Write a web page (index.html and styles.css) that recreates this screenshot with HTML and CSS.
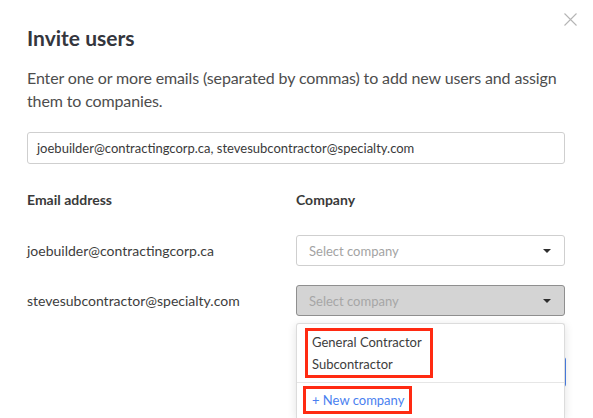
FILE: index.html
```html
<!DOCTYPE html>
<html>
<head>
<meta charset="utf-8">
<link rel="stylesheet" href="styles.css">
</head>
<body>
<div class="modal">
  <button class="close" aria-label="Close">
    <svg width="13" height="13" viewBox="0 0 13 13"><path d="M0.5 0.5 L12.5 12.5 M12.5 0.5 L0.5 12.5" stroke="#b5b5b5" stroke-width="1.1" fill="none"/></svg>
  </button>
  <h1 class="title">Invite users</h1>
  <p class="intro">Enter one or more emails (separated by commas) to add new users and assign them to companies.</p>
  <div class="emails-input">joebuilder@contractingcorp.ca, stevesubcontractor@specialty.com</div>
  <div class="grid">
    <div class="head">Email address</div>
    <div class="head">Company</div>

    <div class="email">joebuilder@contractingcorp.ca</div>
    <div class="select">
      <span class="placeholder">Select company</span>
      <span class="caret"></span>
    </div>

    <div class="email row2">stevesubcontractor@specialty.com</div>
    <div class="select-wrap row2">
      <div class="select active">
        <span class="placeholder">Select company</span>
        <span class="caret"></span>
      </div>
      <div class="dropdown">
        <div class="mark mark-items">
          <div class="item">General Contractor</div>
          <div class="item">Subcontractor</div>
        </div>
        <div class="divider"></div>
        <div class="mark mark-new">
          <div class="item new">+ New company</div>
        </div>
      </div>
    </div>
  </div>
  <div class="footer">
    <button class="primary">Invite</button>
  </div>
</div>
</body>
</html>
```

FILE: styles.css
```css
* { box-sizing: border-box; }
html, body {
  margin: 0;
  padding: 0;
  background: #fff;
}
body {
  font-family: Lato, "Open Sans", sans-serif;
  color: #4a4a4a;
  width: 593px;
  height: 418px;
  overflow: hidden;
}
.modal {
  position: relative;
  padding: 24px 28px 0 27px;
}
.close {
  position: absolute;
  top: 13px;
  left: 564px;
  width: 13px;
  height: 13px;
  padding: 0;
  border: 0;
  background: none;
  line-height: 0;
}
.title {
  margin: 0;
  font-size: 21px;
  line-height: 28px;
  font-weight: 700;
  color: #34363d;
}
.intro {
  margin: 14px 0 0;
  font-size: 16px;
  line-height: 23px;
  letter-spacing: -0.13px;
  color: #4d4d4d;
}
.emails-input {
  margin-top: 20px;
  height: 32px;
  border: 1px solid #cfcfcf;
  border-radius: 3px;
  padding: 0 9px;
  font-size: 13px;
  line-height: 30px;
  color: #3a3a3a;
}
.grid {
  display: grid;
  grid-template-columns: 269px 269px;
  margin-top: 26px;
  align-items: center;
}
.head {
  font-size: 14px;
  line-height: 20px;
  font-weight: 700;
  color: #3a3a3a;
  margin-bottom: 25px;
}
.email {
  font-size: 14px;
  color: #3d3d3d;
}
.row2 { margin-top: 19px; }
.select-wrap { position: relative; }
.select {
  display: flex;
  align-items: center;
  justify-content: space-between;
  height: 31px;
  border: 1px solid #cfcfcf;
  border-radius: 3px;
  padding: 0 12px 0 12px;
  background: #fff;
}
.select.active {
  background: #d4d4d4;
  border-color: #8f8f8f;
}
.placeholder {
  font-size: 13px;
  color: #a3a3a3;
}
.select.active .placeholder { color: #a6a6a6; }
.caret {
  width: 0;
  height: 0;
  border-left: 4px solid transparent;
  border-right: 4px solid transparent;
  border-top: 4px solid #2e2e2e;
  margin-right: 1px;
}
.dropdown {
  position: absolute;
  top: calc(100% + 7px);
  left: 0;
  width: 269px;
  height: 95px;
  background: #fff;
  border: 1px solid #dcdcdc;
  border-bottom: 0;
  border-radius: 3px 3px 0 0;
  box-shadow: 0 2px 10px rgba(0, 0, 0, 0.12);
  padding-top: 4px;
  z-index: 2;
}
.mark {
  border: 3px solid #ff2a12;
  display: inline-block;
}
.mark-items {
  margin-left: 8px;
  padding: 0 4px;
  display: block;
  width: 128px;
}
.mark-new {
  margin: 3px 0 0 6px;
  padding: 0 5px 0 6px;
}
.item {
  font-size: 13px;
  line-height: 22px;
  color: #3d3d3d;
  white-space: nowrap;
}
.item.new { color: #4a7ff0; }
.divider {
  margin-top: 4px;
  height: 1px;
  background: #e6e6e6;
}
.footer {
  display: flex;
  justify-content: flex-end;
  margin-top: 41px;
  margin-right: -1px;
}
.primary {
  height: 30px;
  width: 90px;
  border: 0;
  border-radius: 3px;
  background: #4a7fe6;
  color: #fff;
  font-family: Lato, sans-serif;
  font-size: 13px;
}
```
